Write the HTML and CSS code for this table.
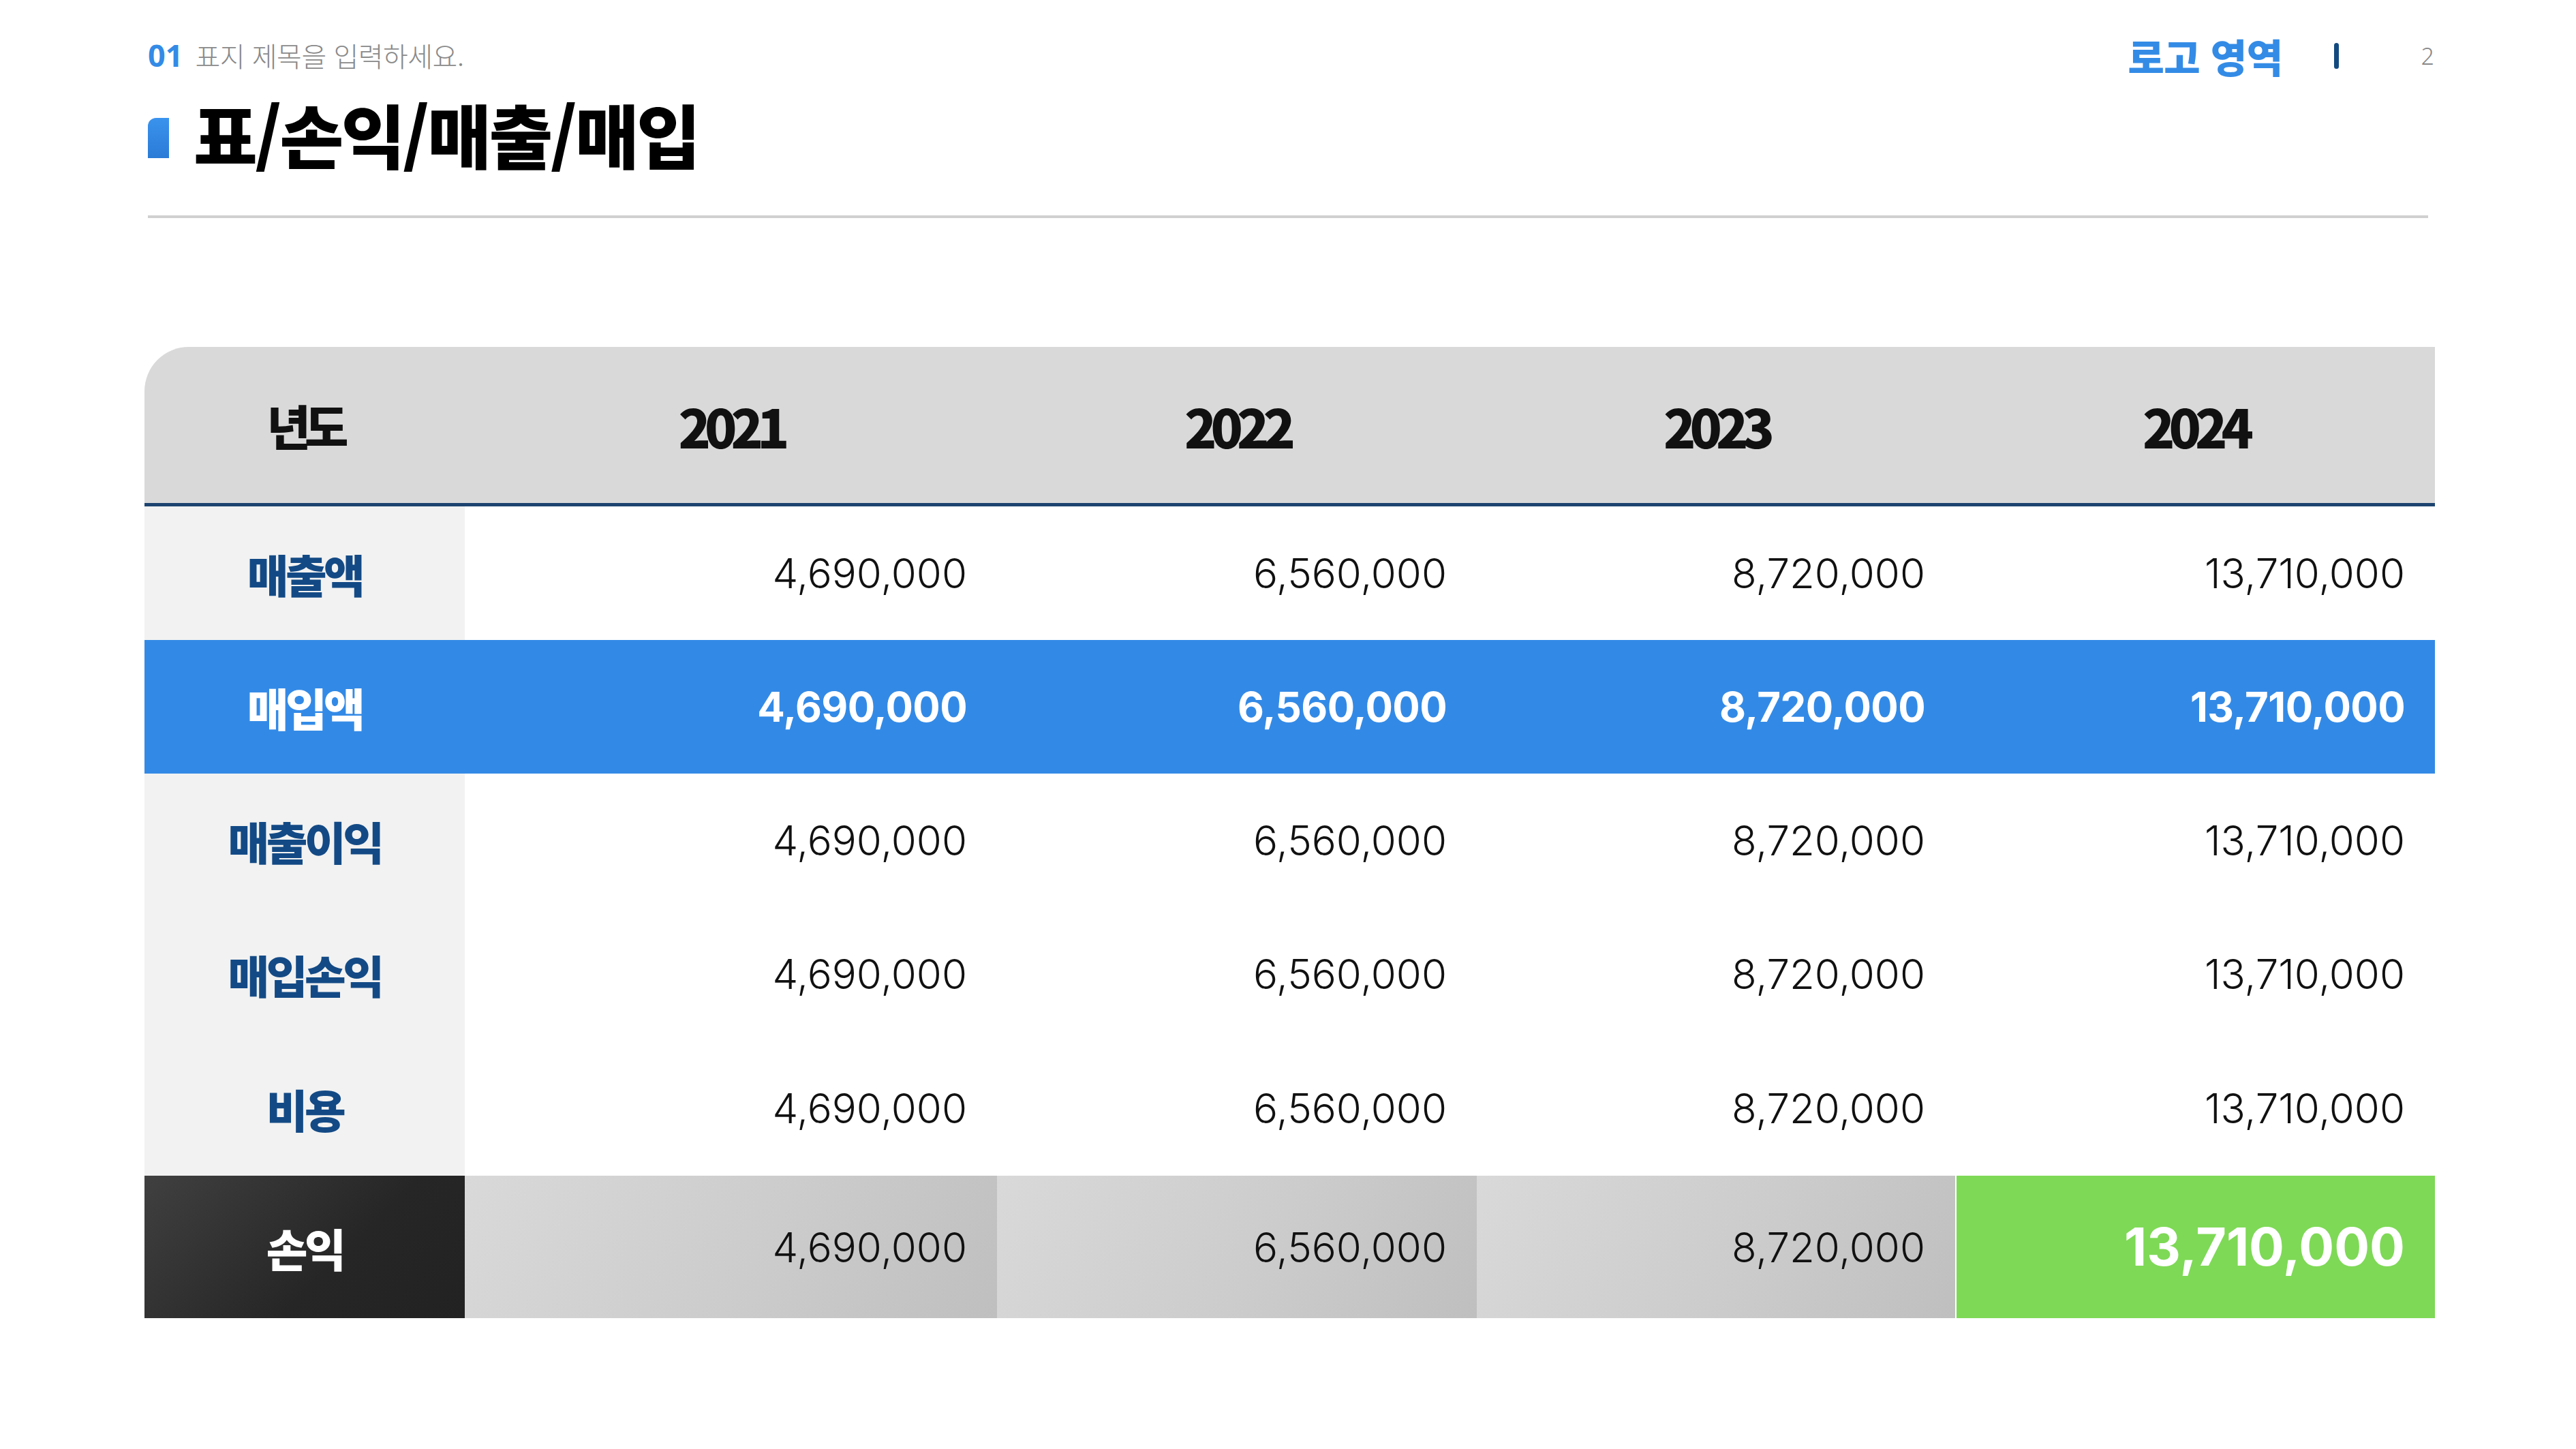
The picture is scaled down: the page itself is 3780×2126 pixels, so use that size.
FILE: index.html
```html
<!DOCTYPE html>
<html lang="ko">
<head>
<meta charset="utf-8">
<title>표/손익/매출/매입</title>
<link rel="stylesheet" href="styles.css">
</head>
<body>
<div class="slide">
  <header class="top">
    <div class="heading">
      <p class="kicker"><span class="kicker-num">01</span><span class="kicker-text">표지 제목을 입력하세요.</span></p>
      <h1 class="title"><span class="title-mark"></span><span class="title-text">표/손익/매출/매입</span></h1>
    </div>
    <div class="brand">
      <span class="logo">로고 영역</span>
      <span class="brand-bar"></span>
      <span class="page-no">2</span>
    </div>
  </header>
  <hr class="rule">
  <div class="grid">
    <div class="cell head head-first">년도</div>
    <div class="cell head">2021</div>
    <div class="cell head">2022</div>
    <div class="cell head">2023</div>
    <div class="cell head">2024</div>

    <div class="cell label">매출액</div>
    <div class="cell num">4,690,000</div>
    <div class="cell num">6,560,000</div>
    <div class="cell num">8,720,000</div>
    <div class="cell num">13,710,000</div>

    <div class="cell label blue">매입액</div>
    <div class="cell num blue">4,690,000</div>
    <div class="cell num blue">6,560,000</div>
    <div class="cell num blue">8,720,000</div>
    <div class="cell num blue">13,710,000</div>

    <div class="cell label">매출이익</div>
    <div class="cell num">4,690,000</div>
    <div class="cell num">6,560,000</div>
    <div class="cell num">8,720,000</div>
    <div class="cell num">13,710,000</div>

    <div class="cell label">매입손익</div>
    <div class="cell num">4,690,000</div>
    <div class="cell num">6,560,000</div>
    <div class="cell num">8,720,000</div>
    <div class="cell num">13,710,000</div>

    <div class="cell label">비용</div>
    <div class="cell num">4,690,000</div>
    <div class="cell num">6,560,000</div>
    <div class="cell num">8,720,000</div>
    <div class="cell num">13,710,000</div>

    <div class="cell label total-label">손익</div>
    <div class="cell num total-num">4,690,000</div>
    <div class="cell num total-num">6,560,000</div>
    <div class="cell num total-num">8,720,000</div>
    <div class="cell num total-green">13,710,000</div>
  </div>
</div>
</body>
</html>
```
FILE: styles.css
```css
html, body {
  margin: 0;
  padding: 0;
  background: #ffffff;
}

.slide {
  width: 3780px;
  height: 2126px;
  overflow: hidden;
  background: #ffffff;
  font-family: "Noto Sans CJK KR", "Noto Sans", sans-serif;
  color: #111111;
}

/* ---------- header ---------- */
.top {
  display: flex;
  justify-content: space-between;
  align-items: flex-start;
  margin-left: 217px;
  width: 3355px;
}

.heading {
  padding-top: 59px;
}

.kicker {
  margin: 0;
  display: flex;
  align-items: baseline;
  height: 44px;
  line-height: 44px;
}

.kicker-num {
  font-family: "Noto Sans", sans-serif;
  font-weight: 700;
  font-size: 45px;
  color: #338be6;
  margin-right: 18px;
}

.kicker-text {
  font-family: "Noto Sans CJK KR", sans-serif;
  font-weight: 300;
  font-size: 40px;
  letter-spacing: -0.5px;
  color: #8a8a8a;
}

.title {
  margin: 33px 0 0;
  display: flex;
  align-items: center;
  height: 120px;
  line-height: 120px;
  font-size: 102px;
  font-weight: 900;
  color: #000000;
}

.title-mark {
  flex: none;
  width: 31px;
  height: 59px;
  margin-top: 12px;
  margin-right: 36px;
  border-top-left-radius: 12px;
  background: linear-gradient(180deg, #3a93ee, #2a7bd6);
}

.title-text {
  letter-spacing: -3.5px;
}

.brand {
  display: flex;
  align-items: center;
  height: 70px;
  margin-top: 47px;
}

.logo {
  font-size: 58px;
  font-weight: 900;
  line-height: 70px;
  letter-spacing: -0.5px;
  color: #338be6;
}

.brand-bar {
  width: 7px;
  height: 38px;
  margin-left: 75px;
  border-radius: 4px;
  background: #124a80;
}

.page-no {
  font-family: "Noto Sans", sans-serif;
  font-weight: 300;
  font-size: 34px;
  line-height: 70px;
  color: #888888;
  margin-left: 121px;
}

.rule {
  margin: 60px 0 0 217px;
  width: 3346px;
  height: 4px;
  border: 0;
  background: #d0d0d0;
}

/* ---------- table ---------- */
.grid {
  margin: 189px 0 0 212px;
  display: grid;
  grid-template-columns: 470px 781px 704px 702px 704px;
  grid-template-rows: 234px 196px 196px 196px 196px 198px 209px;
}

.cell {
  display: flex;
  align-items: center;
  box-sizing: border-box;
}

.head {
  justify-content: center;
  background: #d9d9d9;
  border-bottom: 5px solid #1d4470;
  font-size: 78px;
  font-weight: 900;
  line-height: 1;
  letter-spacing: -9px;
  color: #111111;
}

.head-first {
  border-top-left-radius: 65px;
  font-size: 70px;
  letter-spacing: -9px;
}

.label {
  justify-content: center;
  background: #f2f2f2;
  font-size: 66px;
  font-weight: 900;
  line-height: 1;
  letter-spacing: -4.5px;
  color: #134a85;
}

.num {
  justify-content: flex-end;
  padding-right: 44px;
  background: #ffffff;
  font-family: "Inter", "Noto Sans", sans-serif;
  font-weight: 300;
  font-size: 60px;
  line-height: 1;
  letter-spacing: 0;
  color: #111111;
}

.label.blue {
  background: #338ae6;
  color: #ffffff;
}

.num.blue {
  background: #338ae6;
  color: #ffffff;
  font-weight: 700;
  font-size: 60px;
  letter-spacing: -0.6px;
}

.total-label {
  background: linear-gradient(135deg, #404040 0%, #262626 60%, #222222 100%);
  color: #ffffff;
}

.total-num {
  background: linear-gradient(120deg, #d9d9d9 0%, #cccccc 55%, #bfbfbf 100%);
}

.total-green {
  background: #7ed956;
  border-left: 2px solid #ffffff;
  color: #ffffff;
  font-weight: 700;
  font-size: 77px;
  letter-spacing: 0;
}
```
